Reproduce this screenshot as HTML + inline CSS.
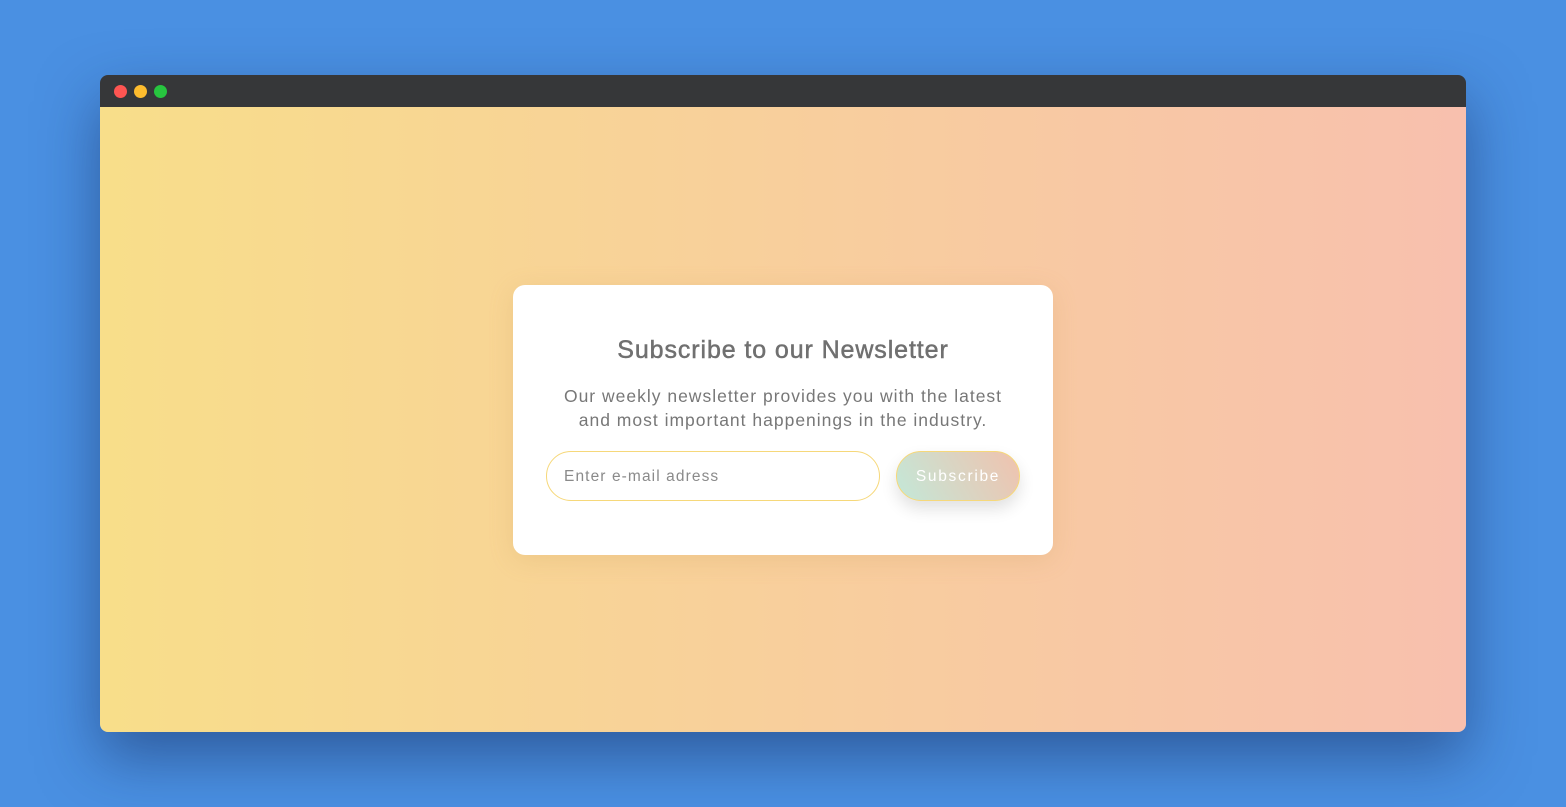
<!DOCTYPE html>
<html><head><style>
*{margin:0;padding:0;box-sizing:border-box}
body{width:1566px;height:807px;background:#4a90e2;position:relative;overflow:hidden;font-family:"Liberation Sans",sans-serif}
.win{position:absolute;left:100px;top:75px;width:1366px;height:657px;border-radius:8px;overflow:hidden;box-shadow:0 25px 60px rgba(20,40,90,.5)}
.bar{height:32px;background:#363739;position:relative}
.d{position:absolute;top:10px;width:13px;height:13px;border-radius:50%}
.main{height:625px;background:linear-gradient(90deg,#f8de8a,#f8c0ae);position:relative}
.card{position:absolute;left:413px;top:178px;width:540px;height:270px;background:#fff;border-radius:12px;box-shadow:0 5px 25px rgba(200,150,80,.2);text-align:center;color:#777}
h1{font-size:25px;font-weight:normal;margin-top:51px;color:#707070;letter-spacing:0.9px;-webkit-text-stroke:.5px #707070}
p{font-size:17.5px;line-height:24px;margin-top:19px;color:#777;letter-spacing:1px}
.in{position:absolute;left:33px;top:166px;width:334px;height:50px;border:1px solid #f6d87a;border-radius:25px;text-align:left;padding-left:17px;line-height:50px;font-size:15.5px;color:#8a8a8a;letter-spacing:1.1px}
.btn{position:absolute;left:383px;top:166px;width:124px;height:50px;border:1px solid #f6d87a;border-radius:25px;background:linear-gradient(60deg,#c3e8d8,#f0c2ae);color:#fff;line-height:50px;font-size:15.5px;letter-spacing:1.7px;box-shadow:0 8px 16px rgba(0,0,0,.12)}
</style></head><body>
<div class="win"><div class="bar">
<div class="d" style="left:14px;background:#fe5552"></div>
<div class="d" style="left:34px;background:#fdbc2e"></div>
<div class="d" style="left:54px;background:#27c53f"></div></div>
<div class="main"><div class="card">
<h1>Subscribe to our Newsletter</h1>
<p>Our weekly newsletter provides you with the latest<br>and most important happenings in the industry.</p>
<div class="in">Enter e-mail adress</div>
<div class="btn">Subscribe</div>
</div></div></div>
</body></html>
